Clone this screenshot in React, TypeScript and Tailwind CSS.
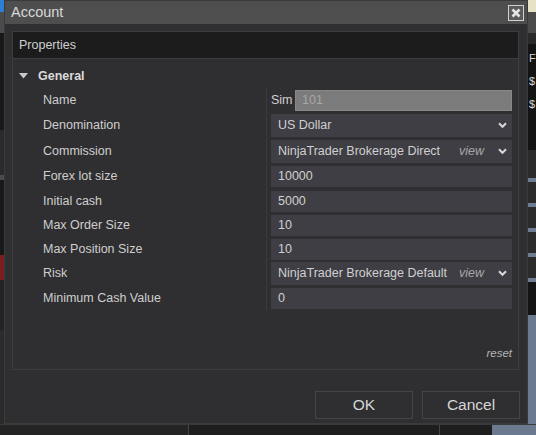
import React from "react";

type Row = {
  label: string;
  h: number;
  kind: "name" | "select" | "text";
  value: string;
  view?: boolean;
};

const rows: Row[] = [
  { label: "Name", h: 25, kind: "name", value: "101" },
  { label: "Denomination", h: 25, kind: "select", value: "US Dollar" },
  { label: "Commission", h: 26, kind: "select", value: "NinjaTrader Brokerage Direct", view: true },
  { label: "Forex lot size", h: 25, kind: "text", value: "10000" },
  { label: "Initial cash", h: 24, kind: "text", value: "5000" },
  { label: "Max Order Size", h: 24, kind: "text", value: "10" },
  { label: "Max Position Size", h: 24, kind: "text", value: "10" },
  { label: "Risk", h: 25, kind: "select", value: "NinjaTrader Brokerage Default", view: true },
  { label: "Minimum Cash Value", h: 25, kind: "text", value: "0" },
];

function Chevron() {
  return (
    <svg width="9" height="7" viewBox="0 0 9 7" className="shrink-0">
      <path d="M1 1.3 L4.5 4.8 L8 1.3" fill="none" stroke="#d8d8d8" strokeWidth="2" />
    </svg>
  );
}

function Field({ row }: { row: Row }) {
  if (row.kind === "name") {
    return (
      <div className="flex items-center h-[21px]">
        <span className="w-[24px] text-[12.5px] text-[#d0d0d0]">Sim</span>
        <div className="flex-1 h-[21px] bg-[#7b7b7b] border border-[#888] flex items-center pl-[6px] text-[12.5px] text-[#a6a6a6]">
          {row.value}
        </div>
      </div>
    );
  }
  if (row.kind === "select") {
    return (
      <div className="h-[23px] bg-[#3e3e44] flex items-center pl-[7px] pr-[5px] text-[12.5px] text-[#d0d0d0]">
        <span className="flex-1 truncate">{row.value}</span>
        {row.view && <span className="italic text-[#a8a8a8] mr-[14px]">view</span>}
        <Chevron />
      </div>
    );
  }
  return (
    <div className="h-[21px] bg-[#3e3e44] flex items-center pl-[7px] text-[12.5px] text-[#d0d0d0]">
      {row.value}
    </div>
  );
}

export default function App() {
  return (
    <div className="relative w-[536px] h-[435px] overflow-hidden bg-[#1d1d1d] font-['Liberation_Sans',Arial,sans-serif]">
      {/* background application peeking around the dialog */}
      <div className="flex flex-col h-full">
        <div className="flex flex-1">
          <div className="w-[4px] flex flex-col">
            <div className="h-[12px] bg-[#2f7fd6]" />
            <div className="h-[21px] bg-[#4b4b4b]" />
            <div className="h-[97px] bg-[#181818]" />
            <div className="h-[45px] bg-[#2b2b2b]" />
            <div className="h-[5px] bg-[#4b4b4b]" />
            <div className="h-[75px] bg-[#181818]" />
            <div className="h-[25px] bg-[#7a1d1d]" />
            <div className="h-[50px] bg-[#232323]" />
            <div className="flex-1 bg-[#2b2b2b]" />
          </div>
          <div className="flex-1" />
          <div className="w-[8px] flex flex-col text-[11px] text-[#d8d8d8] leading-none">
            <div className="h-[12px] bg-[#e6e2c6]" />
            <div className="h-[21px] bg-[#4b4b4b]" />
            <div className="h-[11px] bg-[#2a2a2a]" />
            <div className="h-[106px] bg-[#141414] pl-[1px] pt-[9px] flex flex-col gap-[12px]">
              <span>F</span>
              <span>$</span>
              <span>$</span>
            </div>
            <div className="h-[28px] bg-[#2b2b2b]" />
            <div className="h-[4px] bg-[#6d7c90]" />
            <div className="h-[21px] bg-[#2b2b2b]" />
            <div className="h-[4px] bg-[#6d7c90]" />
            <div className="h-[21px] bg-[#2b2b2b]" />
            <div className="h-[4px] bg-[#6d7c90]" />
            <div className="h-[21px] bg-[#2b2b2b]" />
            <div className="h-[4px] bg-[#6d7c90]" />
            <div className="h-[21px] bg-[#2b2b2b]" />
            <div className="h-[4px] bg-[#6d7c90]" />
            <div className="h-[33px] bg-[#141414]" />
            <div className="flex-1 bg-[#6b7a8f]" />
          </div>
        </div>
        <div className="h-[11px] flex border-t border-[#3a3a3a]">
          <div className="w-[189px] bg-[#242424] border-r border-[#444]" />
          <div className="w-[251px] bg-[#1e1e1e] border-r border-[#444]" />
          <div className="w-[52px] bg-[#1e1e1e]" />
          <div className="flex-1 bg-[#6b7a8f]" />
        </div>
      </div>

      {/* Account dialog */}
      <div className="absolute left-[4px] top-0 w-[524px] h-[424px] bg-[#2f2f31] border border-[#3a3a3a] flex flex-col">
        <div className="h-[23px] bg-[#4e4e4e] flex items-center pl-[6px] pr-[3px]">
          <span className="text-[14.5px] text-[#d8d8d8]">Account</span>
          <div className="ml-auto w-[16px] h-[16px] border border-[#d0d0d0] bg-[#5a5a5a] flex items-center justify-center">
            <svg width="10" height="10" viewBox="0 0 10 10">
              <path d="M1.5 1.5 L8.5 8.5 M8.5 1.5 L1.5 8.5" stroke="#e4e4e4" strokeWidth="2.6" />
            </svg>
          </div>
        </div>

        <div className="pl-[7px] pr-[8px] pt-[7px]">
          <div className="h-[339px] border border-[#3d3d3f] flex flex-col">
            <div className="h-[27px] bg-[#1c1c1c] border-b border-[#3d3d3f] flex items-center pl-[6px] text-[12.5px] text-[#cfcfcf]">
              Properties
            </div>
            <div className="flex-1 flex flex-col">
              <div className="h-[29px] pt-[5px] flex items-center pl-[6px] gap-[10px]">
                <svg width="9" height="6" viewBox="0 0 9 6">
                  <path d="M0 0 L9 0 L4.5 5.5 Z" fill="#c8c8c8" />
                </svg>
                <span className="text-[12.5px] font-bold text-[#dadada]">General</span>
              </div>
              {rows.map((r) => (
                <div key={r.label} className="flex" style={{ height: r.h }}>
                  <div className="w-[254px] border-r border-[#3b3b3d] pl-[30px] flex items-center text-[12.5px] text-[#cecece]">
                    {r.label}
                  </div>
                  <div className="flex-1 pl-[4px] pr-[6px] flex flex-col justify-center">
                    <Field row={r} />
                  </div>
                </div>
              ))}
              <div className="mt-auto flex justify-end pr-[6px] pb-[7px]">
                <span className="text-[11.5px] italic text-[#b4b4b4]">reset</span>
              </div>
            </div>
          </div>
        </div>

        <div className="mt-auto flex justify-end gap-[9px] pr-[7px] pb-[4px]">
          <button className="w-[98px] h-[28px] border border-[#454547] bg-[#2f2f31] text-[15.5px] text-[#d6d6d6]">
            OK
          </button>
          <button className="w-[98px] h-[28px] border border-[#454547] bg-[#2f2f31] text-[15.5px] text-[#d6d6d6]">
            Cancel
          </button>
        </div>
      </div>
    </div>
  );
}
